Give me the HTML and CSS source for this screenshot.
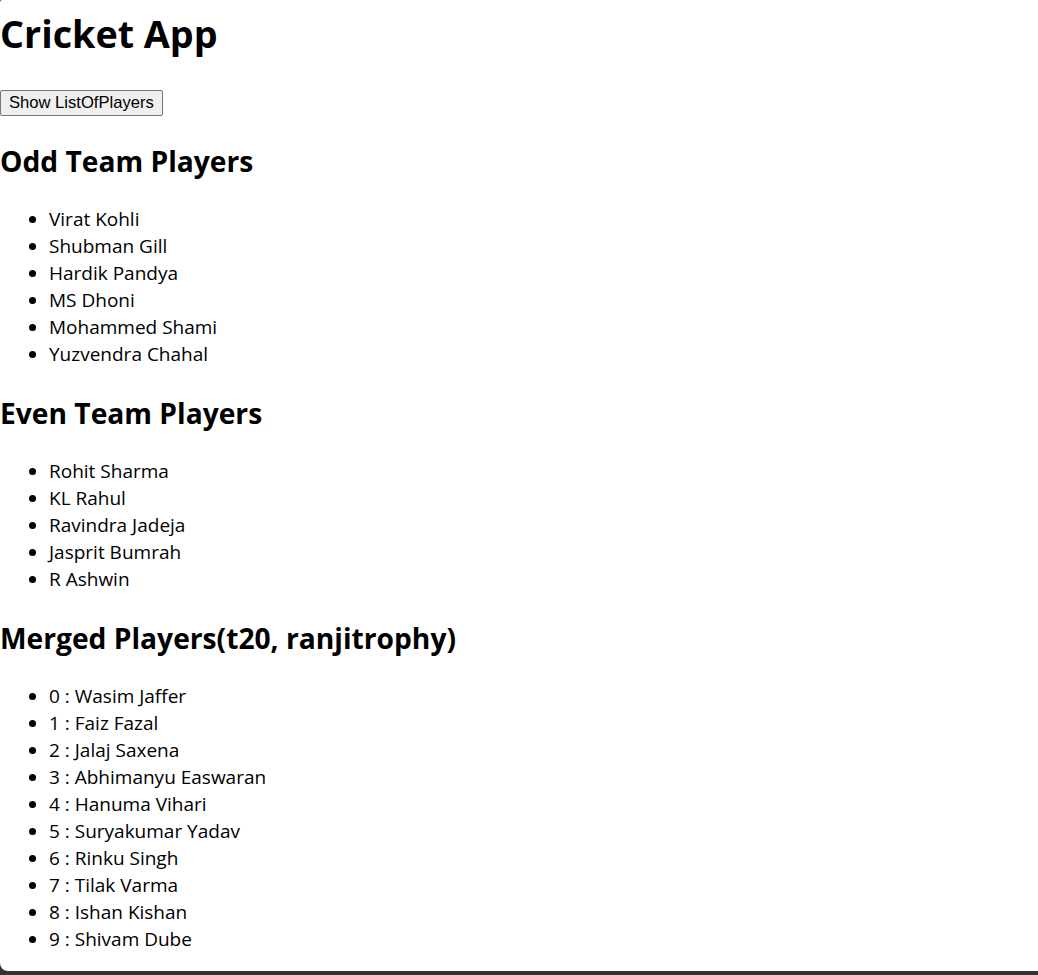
FILE: index.html
```html
<!DOCTYPE html>
<html lang="en">
<head>
<meta charset="utf-8">
<title>Cricket App</title>
<link rel="stylesheet" href="styles.css">
</head>
<body>
<div class="page">
  <h1 class="title">Cricket App</h1>
  <div class="actions"><button class="btn" type="button">Show ListOfPlayers</button></div>
  <h2 class="section">Odd Team Players</h2>
  <ul class="players">
    <li>Virat Kohli</li>
    <li>Shubman Gill</li>
    <li>Hardik Pandya</li>
    <li>MS Dhoni</li>
    <li>Mohammed Shami</li>
    <li>Yuzvendra Chahal</li>
  </ul>
  <h2 class="section">Even Team Players</h2>
  <ul class="players">
    <li>Rohit Sharma</li>
    <li>KL Rahul</li>
    <li>Ravindra Jadeja</li>
    <li>Jasprit Bumrah</li>
    <li>R Ashwin</li>
  </ul>
  <h2 class="section">Merged Players(t20, ranjitrophy)</h2>
  <ul class="players">
    <li>0 : Wasim Jaffer</li>
    <li>1 : Faiz Fazal</li>
    <li>2 : Jalaj Saxena</li>
    <li>3 : Abhimanyu Easwaran</li>
    <li>4 : Hanuma Vihari</li>
    <li>5 : Suryakumar Yadav</li>
    <li>6 : Rinku Singh</li>
    <li>7 : Tilak Varma</li>
    <li>8 : Ishan Kishan</li>
    <li>9 : Shivam Dube</li>
  </ul>
</div>
</body>
</html>
```

FILE: styles.css
```css
html {
  background: #333333;
  height: 100%;
}
body {
  margin: 0;
  height: 971px;
  overflow: hidden;
  background: #ffffff;
  border-bottom-left-radius: 8px;
  border-top-left-radius: 2px;
  font-family: "Open Sans", "Noto Sans", sans-serif;
  font-size: 19px;
  color: #000;
}
.page {
  padding-top: 7px;
}
.title {
  margin: 0;
  font-size: 37.7px;
  line-height: 53px;
  font-weight: 700;
}
.actions {
  margin-top: 29px;
  height: 27px;
  display: flex;
  align-items: center;
}
.btn {
  font-family: "Liberation Sans", Arial, sans-serif;
  font-size: 16.6px;
  height: 26px;
  padding: 0 8px;
  background: #efefef;
  border: 1px solid #767676;
  border-radius: 2px;
  color: #000;
}
.section {
  margin: 25px 0;
  font-size: 28.2px;
  line-height: 40px;
  font-weight: 700;
}
.players {
  margin: 20px 0;
  padding-left: 49px;
  line-height: 27px;
}
```
